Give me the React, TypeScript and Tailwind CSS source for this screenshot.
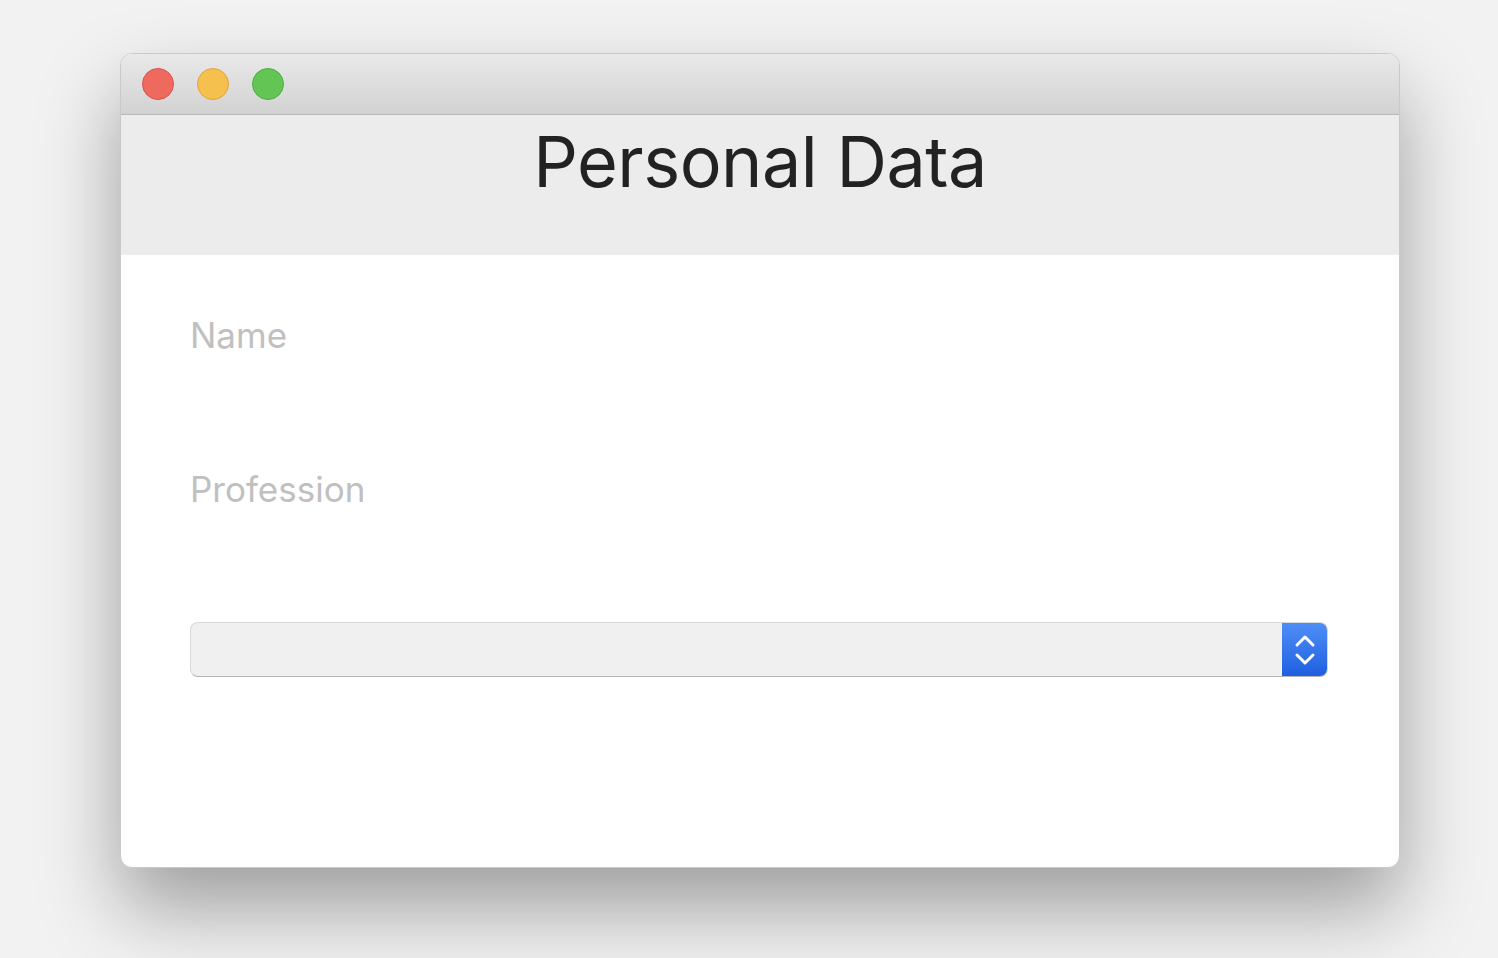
export default function App() {
  return (
    <div className="w-full h-[958px] bg-[#f2f2f2] flex items-start pl-[120px] pt-[53px] font-['Inter','Noto_Sans',sans-serif]">
      <div className="w-[1280px] h-[815px] bg-white rounded-[12px] flex flex-col overflow-hidden border border-[#c9c9c9] shadow-[0_40px_80px_rgba(0,0,0,0.35)]">
        {/* title bar */}
        <div className="h-[61px] shrink-0 bg-gradient-to-b from-[#e9e9e9] to-[#d2d2d2] border-b border-[#b8b8b8] flex items-center gap-[23px] pl-[21px]">
          <span className="w-[32px] h-[32px] rounded-full bg-[#ee6a5f] border border-[#d9534a]" />
          <span className="w-[32px] h-[32px] rounded-full bg-[#f6c04f] border border-[#dea53a]" />
          <span className="w-[32px] h-[32px] rounded-full bg-[#62c554] border border-[#4fae43]" />
        </div>

        {/* header */}
        <div className="h-[140px] shrink-0 bg-[#ececec] flex justify-center">
          <h1 className="text-[70px] leading-none text-[#222222] mt-[12px] tracking-[-0.5px]">Personal Data</h1>
        </div>

        {/* form */}
        <div className="flex flex-col px-[69px] pt-[63px]">
          <label className="text-[35px] leading-none text-[#c0c0c0]">Name</label>
          <label className="text-[35px] leading-none text-[#c0c0c0] mt-[119px]">Profession</label>
          <div className="mt-[115px] w-[1138px] h-[55px] flex rounded-[8px] bg-[#f0f0f0] border border-[#d8d8d8] border-b-[#b5b5b5] overflow-hidden">
            <div className="flex-1" />
            <div className="w-[45px] h-full bg-gradient-to-b from-[#4f8ef7] to-[#1f5fe0] flex items-center justify-center">
              <svg width="24" height="40" viewBox="0 0 24 40" fill="none" stroke="white" strokeWidth="3" strokeLinecap="round" strokeLinejoin="round">
                <path d="M4 15 L12 7 L20 15" />
                <path d="M4 25 L12 33 L20 25" />
              </svg>
            </div>
          </div>
        </div>
      </div>
    </div>
  )
}
